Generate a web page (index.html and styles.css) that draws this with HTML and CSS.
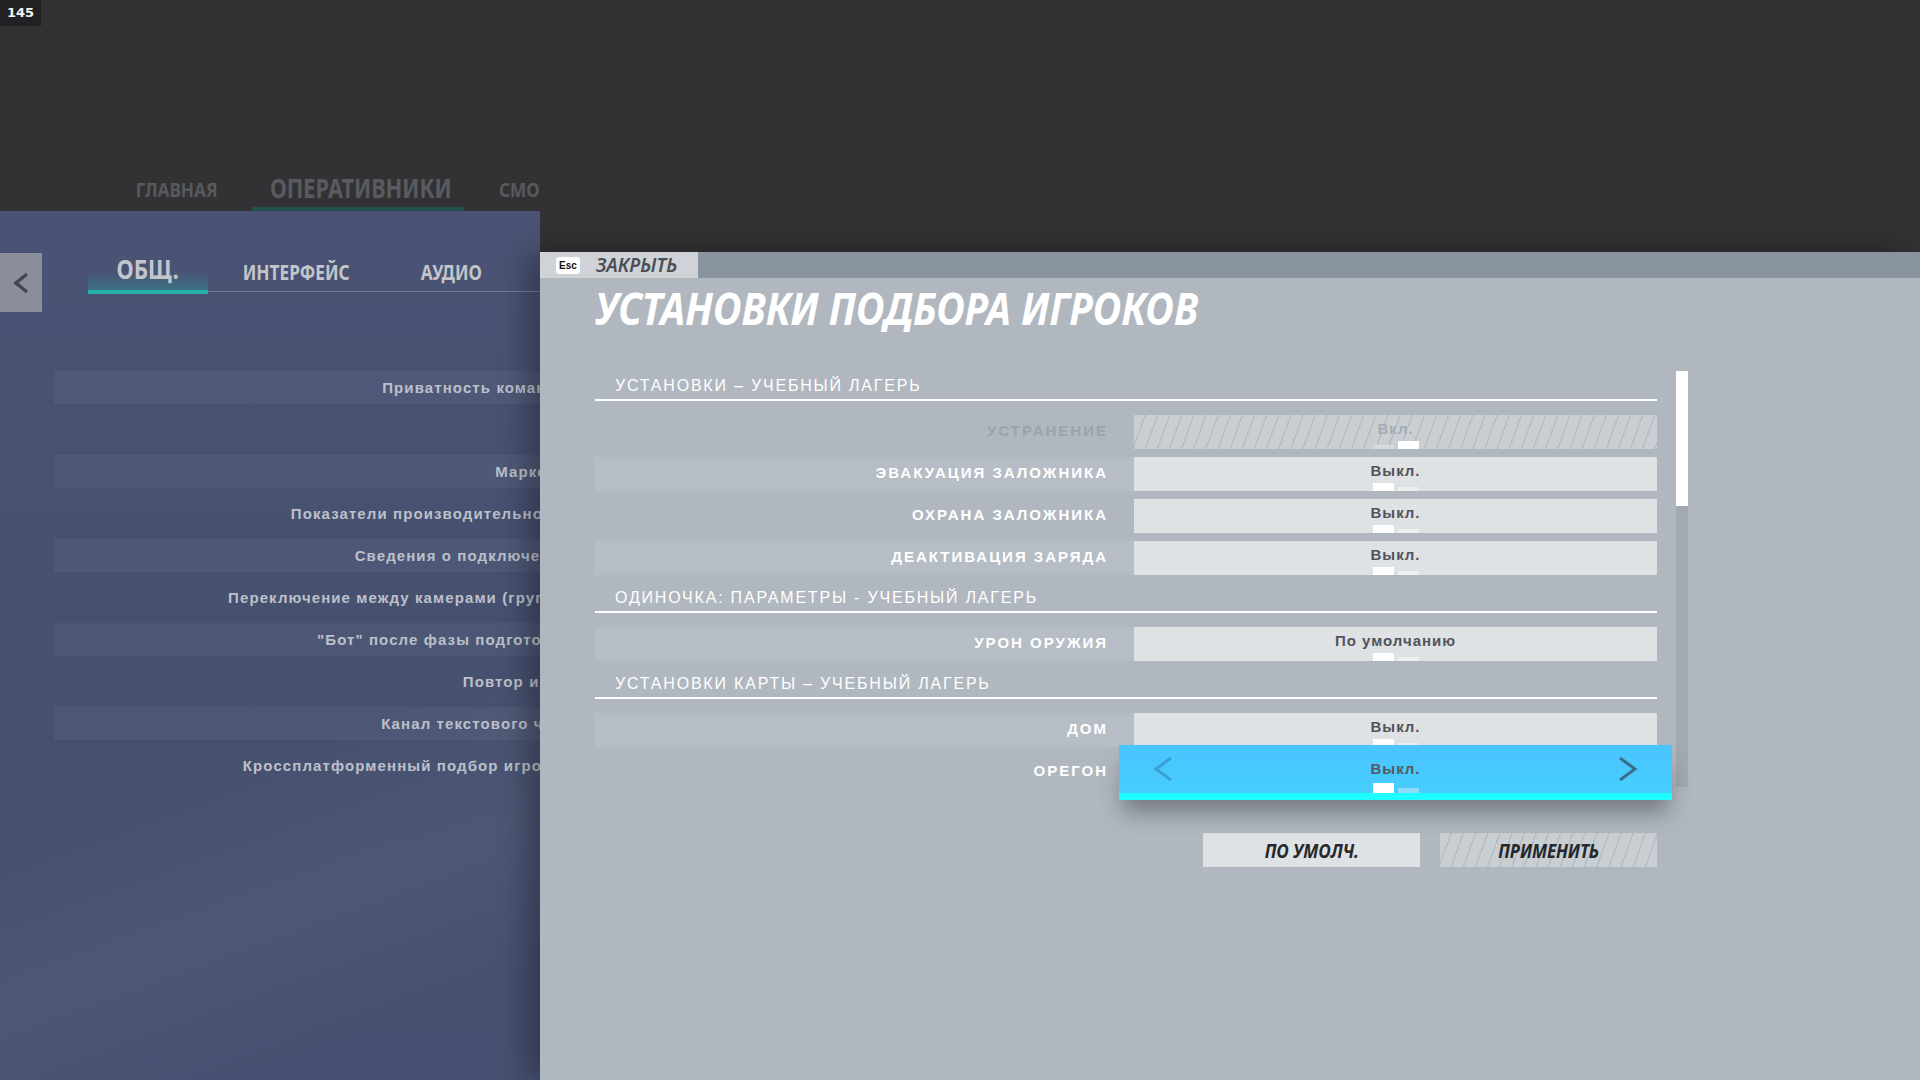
FILE: index.html
```html
<!DOCTYPE html>
<html lang="ru">
<head>
  <meta charset="UTF-8">
  <meta name="viewport" content="width=device-width, initial-scale=1.0">
  <title>Установки подбора игроков</title>
  <link rel="stylesheet" href="styles.css">
</head>
<body>
  <div class="fps">145</div>

  <div class="screen">
    <div class="game">
      <header class="topbar">
        <nav class="mainnav">
          <a class="navitem nav-home"><span>ГЛАВНАЯ</span></a>
          <a class="navitem nav-ops active"><span>ОПЕРАТИВНИКИ</span></a>
          <a class="navitem nav-watch"><span>СМОТРЕТЬ</span></a>
        </nav>
      </header>

      <section class="options">
        <div class="subbar">
          <div class="back">
            <svg width="18" height="22" viewBox="0 0 18 22"><path d="M15 2 L4 11 L15 20" fill="none" stroke="#43464c" stroke-width="3.5"/></svg>
          </div>
          <div class="tabs">
            <div class="tab tab-general active"><span>ОБЩ.</span></div>
            <div class="tab tab-ui"><span>ИНТЕРФЕЙС</span></div>
            <div class="tab tab-audio"><span>АУДИО</span></div>
          </div>
        </div>

        <div class="optlist">
          <div class="opt stripe">Приватность команды</div>
          <div class="opt"></div>
          <div class="opt stripe">Маркеры</div>
          <div class="opt">Показатели производительности</div>
          <div class="opt stripe">Сведения о подключении</div>
          <div class="opt">Переключение между камерами (группа)</div>
          <div class="opt stripe">"Бот" после фазы подготовки</div>
          <div class="opt">Повтор игры</div>
          <div class="opt stripe">Канал текстового чата</div>
          <div class="opt">Кроссплатформенный подбор игроков</div>
        </div>
      </section>
    </div>

    <div class="overlay">
      <div class="overlay-top"></div>
      <div class="modal">
        <div class="modal-bar">
          <div class="close-tab">
            <span class="key">Esc</span>
            <span class="close-label">ЗАКРЫТЬ</span>
          </div>
        </div>

        <div class="modal-body">
          <h1 class="title">УСТАНОВКИ ПОДБОРА ИГРОКОВ</h1>

          <div class="content">
            <div class="settings">
              <div class="section-head">УСТАНОВКИ – УЧЕБНЫЙ ЛАГЕРЬ</div>
              <div class="row disabled">
                <div class="label">УСТРАНЕНИЕ</div>
                <div class="value hatched">
                  <div class="val-text">Вкл.</div>
                  <div class="dots"><span></span><span class="on"></span></div>
                </div>
              </div>
              <div class="row stripe">
                <div class="label">ЭВАКУАЦИЯ ЗАЛОЖНИКА</div>
                <div class="value">
                  <div class="val-text">Выкл.</div>
                  <div class="dots"><span class="on"></span><span></span></div>
                </div>
              </div>
              <div class="row">
                <div class="label">ОХРАНА ЗАЛОЖНИКА</div>
                <div class="value">
                  <div class="val-text">Выкл.</div>
                  <div class="dots"><span class="on"></span><span></span></div>
                </div>
              </div>
              <div class="row stripe">
                <div class="label">ДЕАКТИВАЦИЯ ЗАРЯДА</div>
                <div class="value">
                  <div class="val-text">Выкл.</div>
                  <div class="dots"><span class="on"></span><span></span></div>
                </div>
              </div>

              <div class="section-head">ОДИНОЧКА: ПАРАМЕТРЫ - УЧЕБНЫЙ ЛАГЕРЬ</div>
              <div class="row stripe">
                <div class="label">УРОН ОРУЖИЯ</div>
                <div class="value">
                  <div class="val-text">По умолчанию</div>
                  <div class="dots"><span class="on"></span><span></span></div>
                </div>
              </div>

              <div class="section-head">УСТАНОВКИ КАРТЫ – УЧЕБНЫЙ ЛАГЕРЬ</div>
              <div class="row stripe">
                <div class="label">ДОМ</div>
                <div class="value">
                  <div class="val-text">Выкл.</div>
                  <div class="dots"><span class="on"></span><span></span></div>
                </div>
              </div>
              <div class="row focused">
                <div class="label">ОРЕГОН</div>
                <div class="value">
                  <svg class="arrow left" width="22" height="24" viewBox="0 0 22 24"><path d="M19 1 L4 12 L19 23" fill="none" stroke-width="3"/></svg>
                  <div class="val-main">
                    <div class="val-text">Выкл.</div>
                    <div class="dots"><span class="on"></span><span></span></div>
                  </div>
                  <svg class="arrow right" width="22" height="24" viewBox="0 0 22 24"><path d="M3 1 L18 12 L3 23" fill="none" stroke-width="3"/></svg>
                </div>
              </div>

              <div class="buttons">
                <button class="btn"><span>ПО УМОЛЧ.</span></button>
                <button class="btn hatched"><span>ПРИМЕНИТЬ</span></button>
              </div>
            </div>

            <div class="scroll"><div class="thumb"></div></div>
          </div>
        </div>
      </div>
    </div>
  </div>
</body>
</html>
```

FILE: styles.css
```css
* {
  box-sizing: border-box;
  margin: 0;
  padding: 0;
}

body {
  width: 1920px;
  height: 1080px;
  overflow: hidden;
  background: #323234;
  font-family: 'Liberation Sans', Arial, sans-serif;
}

.fps {
  position: absolute;
  top: 0;
  left: 0;
  width: 41px;
  height: 26px;
  background: #222224;
  color: #f2f2f2;
  font: bold 13px 'DejaVu Sans', sans-serif;
  line-height: 26px;
  text-align: center;
  z-index: 10;
}

.screen {
  display: flex;
  height: 1080px;
}

/* ---------- left, the options page under the popup ---------- */

.game {
  width: 540px;
  flex-shrink: 0;
  overflow: hidden;
  display: flex;
  flex-direction: column;
}

.topbar {
  height: 211px;
  background: #323234;
  display: flex;
  align-items: flex-end;
}

.mainnav {
  display: flex;
  align-items: flex-end;
  gap: 20px;
  padding-left: 121px;
  white-space: nowrap;
}

/* the game font is a condensed one, squeeze the text horizontally */
.navitem {
  flex-shrink: 0;
  font-family: 'Noto Sans', sans-serif;
  font-weight: bold;
  font-size: 20px;
  color: #58595d;
  text-align: center;
  padding-bottom: 4px;
  border-bottom: 4px solid transparent;
}

.navitem span {
  display: inline-block;
  transform: scaleX(0.86);
}

.nav-home {
  width: 111px;
}

.nav-ops {
  width: 212px;
}

.nav-watch {
  text-align: left;
  padding-left: 15px;
}

.nav-watch span {
  transform-origin: left;
}

.navitem.active {
  font-size: 26px;
  color: #5a5b60;
  padding-bottom: 1px;
  border-bottom-color: #244f4f;
}

.navitem.active span {
  transform: scaleX(0.835);
}

.options {
  flex: 1;
  background:
    linear-gradient(160deg, rgba(255,255,255,0) 60%, rgba(255,255,255,0.04) 75%, rgba(255,255,255,0) 90%),
    linear-gradient(180deg, #4a5373 0%, #46506f 50%, #465070 100%);
}

.subbar {
  display: flex;
  padding-top: 42px;
}

.back {
  width: 42px;
  height: 59px;
  flex-shrink: 0;
  background: #8a8e9a;
  display: flex;
  align-items: center;
  justify-content: center;
}

.tabs {
  flex: 1;
  margin-left: 46px;
  height: 41px;
  display: flex;
  background: linear-gradient(#717a96, #717a96) no-repeat 0 38px / 100% 1px;
}

.tab {
  flex-shrink: 0;
  font-family: 'Noto Sans', sans-serif;
  font-weight: bold;
  font-size: 21px;
  color: #c3c5cb;
  padding-bottom: 8px;
  display: flex;
  align-items: flex-end;
  justify-content: center;
  white-space: nowrap;
}

.tab span {
  display: inline-block;
  transform: scaleX(0.82);
}

.tab-general {
  width: 120px;
}

.tab-ui {
  width: 176px;
}

.tab-audio {
  width: 134px;
}

.tab.active {
  font-size: 26px;
  padding-bottom: 3px;
  background: linear-gradient(180deg, rgba(60,150,160,0) 18px, rgba(52,140,150,0.55) 37px);
  border-bottom: 4px solid #26b1ad;
}

.tab.active span {
  transform: scaleX(0.85);
}

.optlist {
  margin-top: 59px;
}

.opt {
  margin-left: 54px;
  width: 560px;
  height: 33px;
  margin-bottom: 9px;
  padding-right: 43px;
  display: flex;
  align-items: center;
  justify-content: flex-end;
  font-size: 15px;
  font-weight: bold;
  letter-spacing: 1.1px;
  color: #bcc0ca;
  white-space: nowrap;
}

.opt.stripe {
  background: rgba(255,255,255,0.045);
}

/* ---------- popup ---------- */

.overlay {
  flex: 1;
  display: flex;
  flex-direction: column;
}

.overlay-top {
  height: 252px;
  background: #323234;
}

.modal {
  flex: 1;
  background: #b1b7bf;
  box-shadow: -14px 0 26px rgba(0,0,0,0.28);
}

.modal-bar {
  height: 26px;
  background: #8a949e;
  display: flex;
}

.close-tab {
  width: 158px;
  background: #cfd3d8;
  display: flex;
  align-items: center;
  padding-left: 16px;
  gap: 16px;
}

.key {
  width: 24px;
  height: 17px;
  background: #fff;
  border-radius: 3px;
  font-size: 10px;
  font-weight: bold;
  color: #111;
  display: flex;
  align-items: center;
  justify-content: center;
}

.close-label {
  font-family: 'Noto Sans', sans-serif;
  font-style: italic;
  font-weight: 600;
  font-size: 19px;
  color: #4b4e55;
}

.modal-body {
  padding-left: 55px;
}

.title {
  font-family: 'Noto Sans', sans-serif;
  font-style: italic;
  font-weight: bold;
  font-size: 45px;
  line-height: 44px;
  color: #fff;
  margin-top: 8px;
  margin-bottom: 41px;
  white-space: nowrap;
  transform: scaleX(0.884);
  transform-origin: left;
}

.content {
  display: flex;
  align-items: flex-start;
}

.settings {
  width: 1062px;
}

.section-head {
  padding: 7px 0 5px 20px;
  line-height: 16px;
  font-size: 16px;
  letter-spacing: 1.8px;
  color: #fff;
  border-bottom: 2px solid #fff;
  margin-bottom: 14px;
}

.row {
  display: flex;
  height: 34px;
  margin-bottom: 8px;
}

.row.stripe {
  background: #b7bdc5;
}

.label {
  flex: 1;
  display: flex;
  align-items: center;
  justify-content: flex-end;
  padding: 0 26px 4px 0;
  font-size: 15px;
  font-weight: bold;
  letter-spacing: 2px;
  color: #fff;
}

.row.disabled .label {
  color: #9ca2aa;
}

.value {
  width: 523px;
  background: #dfe2e5;
  display: flex;
  flex-direction: column;
  align-items: center;
}

.val-text {
  padding-top: 5px;
  line-height: 17px;
  font-size: 15px;
  font-weight: bold;
  letter-spacing: 1px;
  color: #515459;
}

.dots {
  margin-top: auto;
  display: flex;
  align-items: flex-end;
  gap: 4px;
}

.dots span {
  width: 21px;
  height: 4px;
  background: #eceef0;
}

.dots span.on {
  height: 8px;
  background: #fff;
}

.hatched {
  background: repeating-linear-gradient(110deg, #c9ced3 0 10px, #b6bcc3 10px 11.4px);
}

.row.disabled .val-text {
  color: #a5abb2;
}

.row.disabled .dots span {
  background: #d6dade;
}

.row.disabled .dots span.on {
  background: #fff;
}

.row.focused .value {
  width: 553px;
  height: 55px;
  margin: -10px -15px 0 -15px;
  flex-direction: row;
  align-items: center;
  padding: 0 33px;
  background: linear-gradient(180deg, #4ac4fe, #46cefe);
  border-bottom: 7px solid #1efefe;
  box-shadow: 0 16px 22px -4px rgba(40,44,52,0.45);
  position: relative;
}

.val-main {
  flex: 1;
  align-self: stretch;
  display: flex;
  flex-direction: column;
  align-items: center;
}

.row.focused .val-text {
  padding-top: 15px;
  color: #545a60;
}

.row.focused .dots span {
  background: #8fdcf6;
  height: 5px;
}

.row.focused .dots span.on {
  background: #fff;
  height: 10px;
}

.arrow.left path {
  stroke: #3a9fd1;
}

.arrow.right path {
  stroke: #3d6c86;
}

.buttons {
  margin-top: 44px;
  display: flex;
  justify-content: flex-end;
  gap: 20px;
}

.btn {
  width: 217px;
  height: 34px;
  border: none;
  background: #dfe2e5;
  font-family: 'Noto Sans', sans-serif;
  font-style: italic;
  font-weight: bold;
  font-size: 20px;
  color: #26282b;
}

.btn span {
  display: inline-block;
  transform: scaleX(0.86);
}

.btn.hatched {
  background: repeating-linear-gradient(110deg, #c9ced3 0 10px, #b6bcc3 10px 11.4px);
}

.scroll {
  margin-left: 19px;
  width: 12px;
  height: 416px;
  background: #a2a9b1;
}

.thumb {
  height: 135px;
  background: #fff;
}
```
